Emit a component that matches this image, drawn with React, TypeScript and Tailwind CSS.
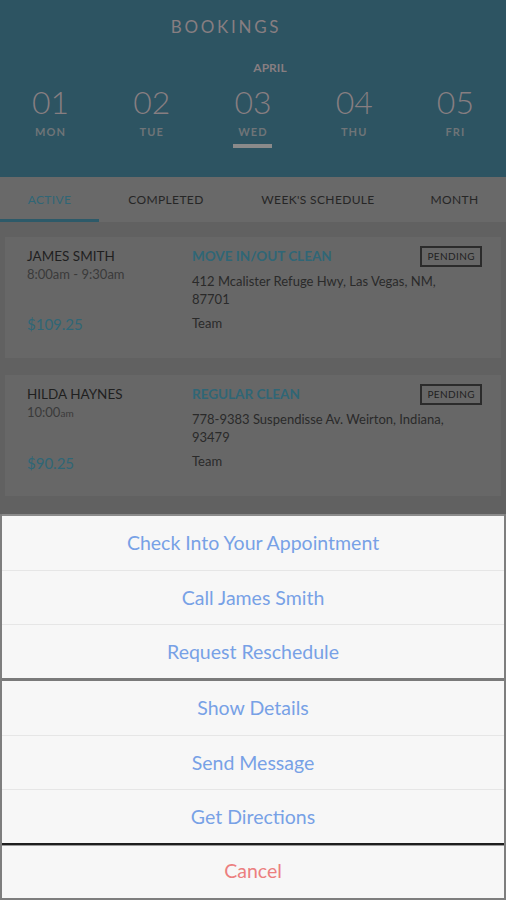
import React from 'react';

interface Day {
  num: string;
  name: string;
  active?: boolean;
}

interface Booking {
  id: string;
  client: string;
  time: React.ReactNode;
  price: string;
  service: string;
  address: string;
  crew: string;
}

const days: Day[] = [
  { num: '01', name: 'MON' },
  { num: '02', name: 'TUE' },
  { num: '03', name: 'WED', active: true },
  { num: '04', name: 'THU' },
  { num: '05', name: 'FRI' },
];

const tabs = [
  { label: 'ACTIVE', width: 'w-[99px]', active: true },
  { label: 'COMPLETED', width: 'w-[134px]' },
  { label: "WEEK'S SCHEDULE", width: 'w-[170px]' },
  { label: 'MONTH', width: 'flex-1' },
];

const bookings: Booking[] = [
  {
    id: 'b1',
    client: 'JAMES SMITH',
    time: '8:00am - 9:30am',
    price: '$109.25',
    service: 'MOVE IN/OUT CLEAN',
    address: '412 Mcalister Refuge Hwy, Las Vegas, NM, 87701',
    crew: 'Team',
  },
  {
    id: 'b2',
    client: 'HILDA HAYNES',
    time: (
      <>
        10:00<span className="text-[10px]">am</span>
      </>
    ),
    price: '$90.25',
    service: 'REGULAR CLEAN',
    address: '778-9383 Suspendisse Av. Weirton, Indiana, 93479',
    crew: 'Team',
  },
];

const actionGroups = [
  ['Check Into Your Appointment', 'Call James Smith', 'Request Reschedule'],
  ['Show Details', 'Send Message', 'Get Directions'],
];

const BookingCard: React.FC<{ booking: Booking }> = ({ booking }) => (
  <div className="flex h-[121px] bg-[#676767] pl-[22px] pr-[19px] pt-[8px]">
    <div className="flex w-[165px] flex-col">
      <div className="mt-[2px] text-[13.5px] leading-[18px] text-[#1f1f1f]">{booking.client}</div>
      <div className="text-[13px] leading-[18px] text-[#3a3a3a]">{booking.time}</div>
      <div className="mt-[32px] text-[15px] leading-[18px] text-[#2f6676]">{booking.price}</div>
    </div>
    <div className="flex flex-1 flex-col">
      <div className="flex items-start justify-between">
        <div className="mt-[2px] text-[13.5px] font-bold leading-[18px] text-[#2f6676]">{booking.service}</div>
        <span className="mt-[1px] border-2 border-[#2b2b2b] px-[5px] py-[2px] text-[10px] leading-[13px] tracking-[0.04em] text-[#1f1f1f]">
          PENDING
        </span>
      </div>
      <div className="mt-[5px] w-[275px] text-[13px] leading-[18px] text-[#2a2a2a]">{booking.address}</div>
      <div className="mt-[6px] text-[13px] leading-[18px] text-[#2a2a2a]">{booking.crew}</div>
    </div>
  </div>
);

export default function App() {
  return (
    <div className="relative h-[900px] w-[506px] overflow-hidden bg-[#616161] font-['Lato',sans-serif]">
      {/* Header */}
      <div className="h-[177px] bg-[#2d5462]">
        <div className="flex justify-center pr-[54px] pt-[17px]">
          <span className="text-[17px] leading-[20px] tracking-[0.16em] text-[#877e81]">BOOKINGS</span>
        </div>
        <div className="mt-[24px] flex justify-center pl-[34px]">
          <span className="text-[12px] font-bold leading-[14px] text-[#877e81]">APRIL</span>
        </div>
        <div className="mt-[9px] grid grid-cols-5">
          {days.map((day) => (
            <div key={day.num} className="flex flex-col items-center">
              <span className="text-[32px] font-light leading-[36px] text-[#877e81]">{day.num}</span>
              <span className="mt-[5px] text-[11px] font-bold leading-[13px] tracking-[0.1em] text-[#6f7478]">
                {day.name}
              </span>
              {day.active && <span className="mt-[6px] h-[4px] w-[39px] bg-[#8a8a8a]" />}
            </div>
          ))}
        </div>
      </div>

      {/* Tabs */}
      <div className="flex h-[45px] bg-[#696969]">
        {tabs.map((tab) => (
          <div
            key={tab.label}
            className={`relative flex ${tab.width} items-center justify-center text-[12px] tracking-[0.03em] ${
              tab.active ? 'text-[#2f6676]' : 'text-[#262626]'
            }`}
          >
            {tab.label}
            {tab.active && <span className="absolute bottom-0 left-0 h-[3px] w-full bg-[#2d5a69]" />}
          </div>
        ))}
      </div>

      {/* Bookings */}
      <div className="flex flex-col gap-[17px] px-[5px] pt-[15px]">
        {bookings.map((b) => (
          <BookingCard key={b.id} booking={b} />
        ))}
      </div>

      {/* Action sheet */}
      <div className="absolute inset-x-0 bottom-0 top-[514px] border-x-[2px] border-b-[2px] border-[#7e7e7e] bg-[#f7f7f7]">
        <div className="h-[2px] bg-[#8c8c8c]" />
        {actionGroups.map((group, gi) => (
          <div key={gi} className={gi > 0 ? 'border-t-[3px] border-[#7a7a7a]' : ''}>
            {group.map((label, i) => (
              <div
                key={label}
                className={`flex h-[54px] items-center justify-center text-[19.5px] text-[#77a1e6] ${
                  i > 0 ? 'border-t border-[#e6e6e6]' : ''
                }`}
              >
                {label}
              </div>
            ))}
          </div>
        ))}
        <div className="border-t-[2px] border-[#1e1e1e]">
          <div className="flex h-[51px] items-center justify-center border-t border-[#9a9a9a] text-[19.5px] text-[#ec7f7f]">
            Cancel
          </div>
        </div>
      </div>
    </div>
  );
}
